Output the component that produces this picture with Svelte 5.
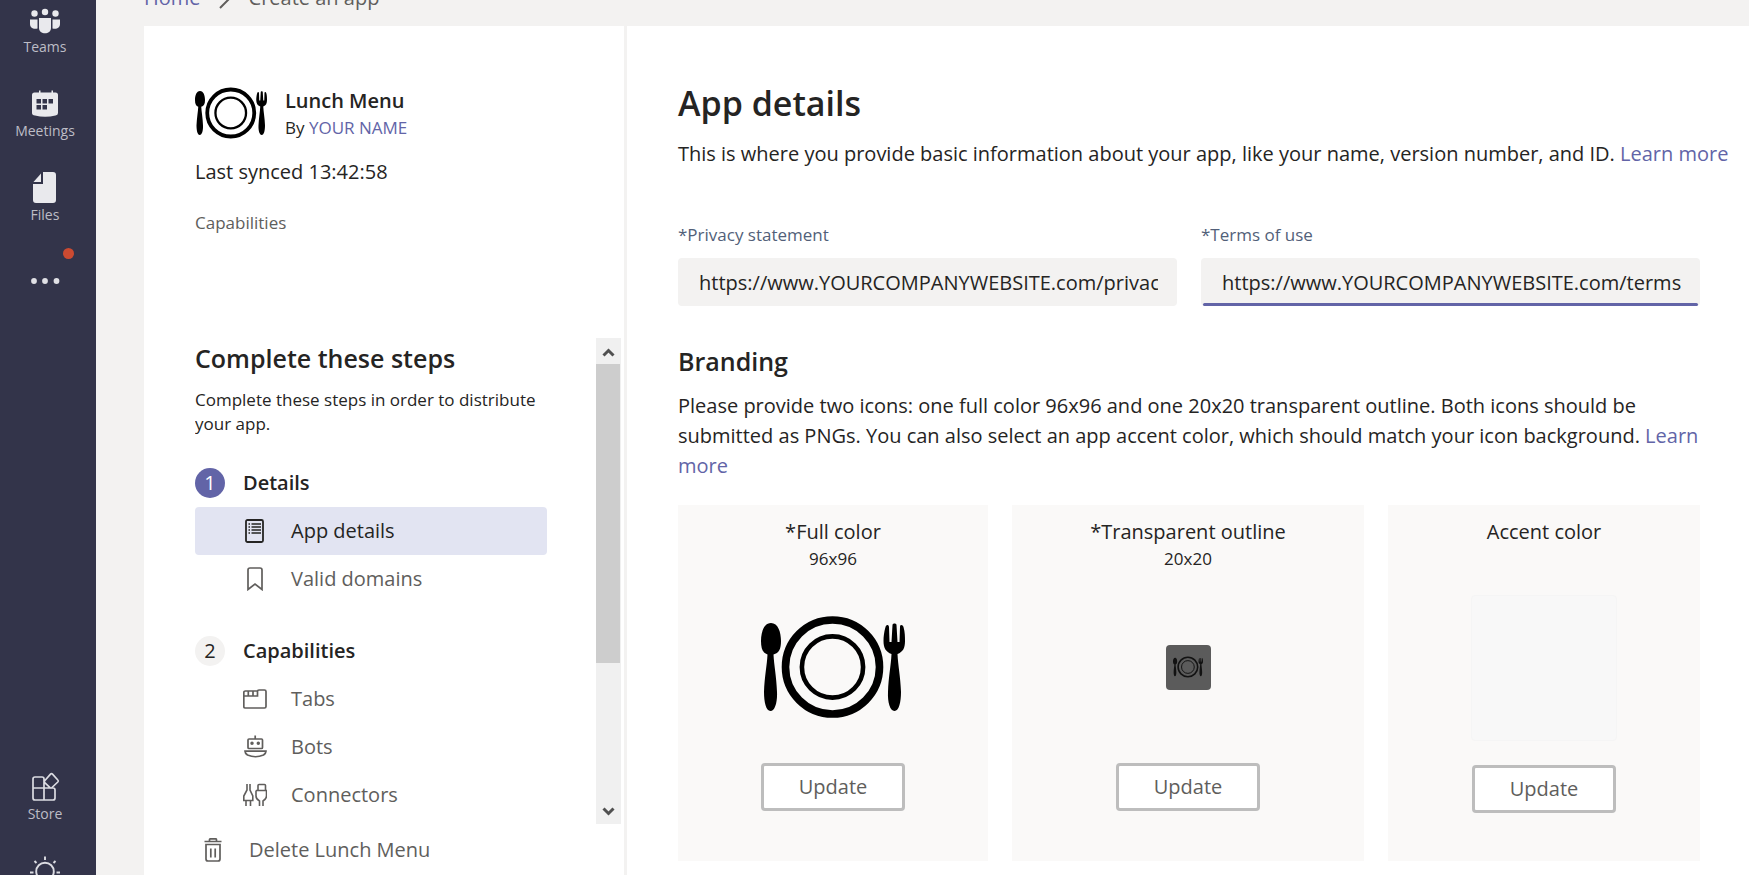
<script>
  let privacy = $state('https://www.YOURCOMPANYWEBSITE.com/privacy');
  let terms = $state('https://www.YOURCOMPANYWEBSITE.com/terms');
</script>

{#snippet plate()}
  <svg class="plate" viewBox="0 0 144 144" aria-hidden="true">
    <circle cx="71.5" cy="72" r="47" fill="none" stroke="#000" stroke-width="7.6" />
    <circle cx="71.5" cy="72" r="30.6" fill="none" stroke="#000" stroke-width="4.6" />
    <path d="M10 28C3 28 0 37 0 46c0 8 2 12 6.500 13.500C6 70 3.500 82 3 97c0 10 2 19 6.500 19s7-9 6.500-19c-.5-15-3-27-3.500-37.500C18 58 20 54 20 46c0-9-3-18-10-18z" />
    <path d="M131.500 30c0-2 4-2 4 0l1 17h2l.5-15c0-3 3-2 3.500 0 1.500 5 1.500 10 1.500 14 0 7-2 11-7.500 13 .5 11 3 23 3.500 38 0 10-2 19-6.500 19s-7-9-6.500-19c.5-15 3-27 3.500-38-5.500-2-8-6-8-13 0-4 .5-9 2-14 .5-2 3-3 3.500 0l.5 15h2z" />
  </svg>
{/snippet}

<div class="page">
  <nav class="rail">
    <a class="rail-item" href="#teams">
      <svg viewBox="0 0 32 32" fill="#e9e9ed">
        <circle cx="5.500" cy="9.500" r="3.200" /><circle cx="16" cy="8" r="3.200" /><circle cx="26.500" cy="9.500" r="3.200" />
        <path d="M10 14h12v10c0 7-12 7-12 0zM1 15.500h7.500v9C4 25.500 1 23.500 1 20zM31 15.500h-7.500v9c4.500 1 7.500-1 7.500-4.500z" />
      </svg>
      <span>Teams</span>
    </a>
    <a class="rail-item" href="#meetings">
      <svg viewBox="0 0 32 32" fill="#e9e9ed">
        <path fill-rule="evenodd" d="M10 2.500h1.500v2h11v-2H24v2h2.500Q29 4.500 29 7v18q0 2-2.500 2.500Q16 30 6 27.500 3 27 3 25V7q0-2.500 2.500-2.500H10zM7.500 11v4.500H12V11zm6 0v4.500H18V11zm6 0v4.500H24V11zM7.500 17v4.500H12V17zm6 0v4.500H18V17z" />
      </svg>
      <span>Meetings</span>
    </a>
    <a class="rail-item" href="#files">
      <svg viewBox="0 0 32 32" fill="#e9e9ed">
        <path d="M14 0h10q3 0 3 3v25q0 3-3 3H7q-3 0-3-3V12h10z" /><path d="M12 1.500V10H4.500z" />
      </svg>
      <span>Files</span>
    </a>
    <button class="more" aria-label="More apps">
      <svg viewBox="0 0 32 50">
        <circle cx="39.500" cy="-2.500" r="5.500" fill="#cc4a31" />
        <g fill="#e0e0e5"><circle cx="5" cy="25" r="2.900" /><circle cx="16" cy="25" r="2.900" /><circle cx="27.500" cy="25" r="2.900" /></g>
      </svg>
    </button>
    <div class="rail-bottom">
      <a class="rail-item" href="#store">
        <svg viewBox="0 0 32 32" fill="none" stroke="#dcdce2" stroke-width="1.700">
          <path d="M15 17V8q0-2-2-2H6Q4 6 4 8v19q0 2 2 2h18q2 0 2-2v-8q0-2-2-2H4M15 17v12M15.500 10l6-6.800q1-1 2 0l5.300 5.800q1 1 0 2L23 16.500q-1 1-2 0l-5.500-5q-.6-.7 0-1.500z" />
        </svg>
        <span>Store</span>
      </a>
      <button class="sun" aria-label="Settings">
        <svg viewBox="0 0 32 32" fill="none" stroke="#dcdce2" stroke-width="1.900">
          <circle cx="16" cy="16.500" r="8.800" />
          <path d="M16 1.500v3.500M5.500 6l2 2M26.500 6l-2 2M1 17.500h3.500M27.500 17.500H31" />
        </svg>
      </button>
    </div>
  </nav>

  <div class="workspace">
    <div class="crumbs">
      <a href="#home">Home</a>
      <svg width="12" height="22" viewBox="0 0 12 22" fill="none" stroke="#605e5c" stroke-width="2"><path d="M2 2l9 9-10 10" /></svg>
      <span>Create an app</span>
    </div>

    <div class="sheet">
      <aside class="side">
        <div class="app-head">
          {@render plate()}
          <div>
            <div class="app-name">Lunch Menu</div>
            <div class="by">By <a href="#author">YOUR NAME</a></div>
          </div>
        </div>
        <div class="synced">Last synced 13:42:58</div>
        <div class="caps">Capabilities</div>

        <div class="scroller">
          <div class="steps">
            <h2>Complete these steps</h2>
            <p>Complete these steps in order to distribute your app.</p>
            <div class="step"><span class="num on">1</span><strong>Details</strong></div>
            <a class="row active" href="#details">
              <svg viewBox="0 0 24 24" fill="none" stroke="#252423" stroke-width="1.800">
                <rect x="3" y="1" width="17" height="22" rx="1.500" />
                <path d="M8.500 5H18M8.500 8H18M8.500 11H18M8.500 14H18" stroke-width="1.600" /><path d="M5.500 5H7M5.500 8H7M5.500 11H7M5.500 14H7" stroke-width="1.600" />
              </svg>
              App details
            </a>
            <a class="row" href="#domains">
              <svg viewBox="0 0 24 24" fill="none" stroke="#605e5c" stroke-width="1.700"><path d="M5 22.500V3q0-2 2-2h10q2 0 2 2v19.500L12 17z" /></svg>
              Valid domains
            </a>
            <div class="step second"><span class="num">2</span><strong>Capabilities</strong></div>
            <a class="row" href="#tabs">
              <svg viewBox="0 0 24 24" fill="none" stroke="#605e5c" stroke-width="1.700"><path d="M.8 9h13.700V4.500q0-1.500 1.500-1.500h5.500q1.500 0 1.500 1.500v15q0 1.500-1.500 1.500H2.300Q.8 21 .8 19.500v-14Q.8 4 2.300 4h12.200M5.300 4v5M10 4v5" /></svg>
              Tabs
            </a>
            <a class="row" href="#bots">
              <svg viewBox="0 0 24 24" fill="none" stroke="#605e5c" stroke-width="1.700"><rect x="5" y="4" width="14.500" height="9.500" rx="1" /><path d="M12.200.5V4M2 16.200h21q0 2-2.500 3.800-8 3.500-16 0Q2 18.200 2 16.200z" /><circle cx="9" cy="8.300" r=".9" fill="#605e5c" /><circle cx="15.300" cy="8.300" r=".9" fill="#605e5c" /></svg>
              Bots
            </a>
            <a class="row" href="#connectors">
              <svg viewBox="0 0 24 24" fill="none" stroke="#605e5c" stroke-width="1.600"><path d="M4 1v6L.8 13v4.500h9V13L7 7V1M3 17.500V23M7.500 17.500V23M15 7.500V2.500q0-1 1-1h5.500q1 0 1 1v5M13 7.500h10.500v5.500q0 3-3.500 5v5M13 7.500V13q0 3 3.500 5v5" /></svg>
              Connectors
            </a>
          </div>
          <div class="track" aria-hidden="true">
            <svg viewBox="0 0 25 26" fill="none" stroke="#505050" stroke-width="3"><path d="M7.500 17.500l5-5 5 5" /></svg>
            <div class="thumb"></div>
            <svg class="down" viewBox="0 0 25 26" fill="none" stroke="#505050" stroke-width="3"><path d="M7.500 10.500l5 5 5-5" /></svg>
          </div>
        </div>

        <button class="delete">
          <svg viewBox="0 0 24 24" fill="none" stroke="#605e5c" stroke-width="1.700"><path d="M3.500 3.500h17M8.500 3.500V1.800q0-1 1-1h5q1 0 1 1v1.700M5 6.500h14V21q0 2-2 2H7q-2 0-2-2zM9.800 10.500v9M14.200 10.500v9" /></svg>
          Delete Lunch Menu
        </button>
      </aside>

      <main>
        <h1>App details</h1>
        <p class="intro">This is where you provide basic information about your app, like your name, version number, and ID. <a href="#learn">Learn more</a></p>

        <div class="form">
          <div class="fields">
            <div class="field">
              <label for="privacy">*Privacy statement</label>
              <input id="privacy" type="text" bind:value={privacy} />
            </div>
            <div class="field focus">
              <label for="terms">*Terms of use</label>
              <input id="terms" type="text" bind:value={terms} />
            </div>
          </div>

          <h2>Branding</h2>
          <p class="brand-text">Please provide two icons: one full color 96x96 and one 20x20 transparent outline. Both icons should be submitted as PNGs. You can also select an app accent color, which should match your icon background. <a href="#learn-branding">Learn more</a></p>

          <div class="cards">
            <section class="card">
              <div class="title">*Full color</div>
              <div class="sub">96x96</div>
              <div class="art">{@render plate()}</div>
              <button class="update">Update</button>
            </section>
            <section class="card">
              <div class="title">*Transparent outline</div>
              <div class="sub">20x20</div>
              <div class="art"><div class="tile">{@render plate()}</div></div>
              <button class="update">Update</button>
            </section>
            <section class="card">
              <div class="title">Accent color</div>
              <div class="sub"></div>
              <div class="swatch"></div>
              <button class="update">Update</button>
            </section>
          </div>
        </div>
      </main>
    </div>
  </div>
</div>

<style>
  :global(body) { margin: 0; overflow: hidden; }
  .page {
    display: flex; height: 100vh; overflow: hidden;
    background: #f3f2f1; color: #252423;
    font: 20px/30px "Open Sans", "Noto Sans", sans-serif;
  }
  * { box-sizing: border-box; }
  h1, h2, p { margin: 0; }
  a { color: #6264a7; text-decoration: none; }
  button, input { font: inherit; color: inherit; margin: 0; border: 0; background: none; }
  svg { display: block; flex: none; }

  .rail {
    flex: 0 0 96px; padding: 4px 6px 0 0; background: #33344a;
    display: flex; flex-direction: column; align-items: center; gap: 30px;
  }
  .rail-item { display: flex; flex-direction: column; align-items: center; color: #bdbdc6; font-size: 14px; line-height: 22px; }
  .rail-item svg, .sun svg { width: 32px; height: 32px; }
  .more { padding: 0; }
  .more svg { width: 32px; height: 50px; overflow: visible; }
  .rail-bottom { margin-top: auto; display: flex; flex-direction: column; align-items: center; gap: 30px; }
  .sun { height: 20px; padding: 0; overflow: hidden; display: flex; align-items: flex-start; }

  .workspace { flex: 1; min-width: 0; padding-left: 48px; display: flex; flex-direction: column; }
  .crumbs { display: flex; align-items: center; gap: 18px; height: 30px; margin: -17px 0 13px; flex: none; color: #605e5c; }

  .sheet { flex: 1; min-height: 0; display: flex; background: #fff; }
  .side { flex: 0 0 483px; border-right: 3px solid #f3f2f1; padding: 51px 3px 0 51px; display: flex; flex-direction: column; }
  .app-head { display: flex; align-items: center; gap: 18px; height: 72px; }
  .app-head .plate { width: 72px; height: 72px; }
  .app-name { font-weight: 600; line-height: 30px; }
  .by { font-size: 17px; line-height: 24px; }
  .synced { margin-top: 8px; }
  .caps { margin-top: 24px; font-size: 17px; line-height: 24px; color: #605e5c; }

  .scroller { margin-top: 103px; height: 486px; display: flex; justify-content: space-between; overflow: hidden; flex: none; }
  .steps { width: 352px; }
  h2 { font-size: 25px; line-height: 36px; font-weight: 600; }
  .steps h2 { margin-top: 2px; }
  .steps p { font-size: 17px; line-height: 24px; margin-top: 12px; }
  .step { display: flex; align-items: center; gap: 18px; height: 30px; margin-top: 32px; margin-bottom: 9px; }
  .step.second { margin-top: 33px; }
  .step strong { font-weight: 600; }
  .num { width: 30px; height: 30px; border-radius: 50%; background: #f3f2f1; text-align: center; }
  .num.on { background: #6264a7; color: #fff; }
  .row { display: flex; align-items: center; gap: 24px; height: 48px; padding-left: 48px; border-radius: 4px; color: #605e5c; }
  .row.active { background: #e2e4f2; color: #252423; }
  .row svg, .delete svg { width: 24px; height: 24px; }
  .track { width: 25px; background: #f0f0f0; display: flex; flex-direction: column; }
  .track svg { width: 25px; height: 26px; }
  .thumb { width: 24px; height: 299px; background: #cdcdcd; }
  .track .down { margin-top: auto; }
  .delete { display: flex; align-items: center; gap: 24px; padding: 11px 6px; color: #605e5c; }

  main { flex: 1; min-width: 0; padding: 51px 0 0 51px; }
  h1 { font-size: 34px; line-height: 52px; font-weight: 600; }
  .intro { margin-top: 10px; }
  .form { margin-right: 49px; }
  .fields { display: grid; grid-template-columns: 1fr 1fr; gap: 24px; margin-top: 54px; }
  label { display: block; font-size: 17px; line-height: 24px; color: #525f79; }
  .field input { display: block; width: 100%; height: 48px; margin-top: 11px; padding: 0 19px 0 21px; background: #f3f2f1; border-radius: 4px; outline: none; }
  .focus { position: relative; }
  .focus::after { content: ""; position: absolute; left: 2px; right: 2px; bottom: 0; height: 3px; border-radius: 2px; background: #6264a7; }
  .form h2 { margin-top: 37px; }
  .brand-text { margin-top: 12px; }
  .cards { display: grid; grid-template-columns: 310fr 352fr 312fr; gap: 24px; margin-top: 24px; }
  .card { background: #faf9f8; height: 356px; padding-top: 12px; display: flex; flex-direction: column; align-items: center; }
  .title { line-height: 30px; }
  .sub { font-size: 17px; line-height: 24px; height: 24px; }
  .art { width: 144px; height: 144px; margin-top: 24px; display: flex; align-items: center; justify-content: center; }
  .art > .plate { width: 144px; height: 144px; }
  .tile { width: 45px; height: 45px; border-radius: 4px; background: #5b5b5b; display: flex; align-items: center; justify-content: center; }
  .tile .plate { width: 30px; height: 30px; opacity: .8; }
  .swatch { width: 146px; height: 146px; margin-top: 24px; border: 1px solid #f5f5f5; border-radius: 4px; background: #f8f8f8; }
  .update { width: 144px; height: 48px; margin-top: 24px; padding: 0; background: #fff; border: 3px solid #bdbdbd; border-radius: 4px; color: #605e5c; }
</style>
